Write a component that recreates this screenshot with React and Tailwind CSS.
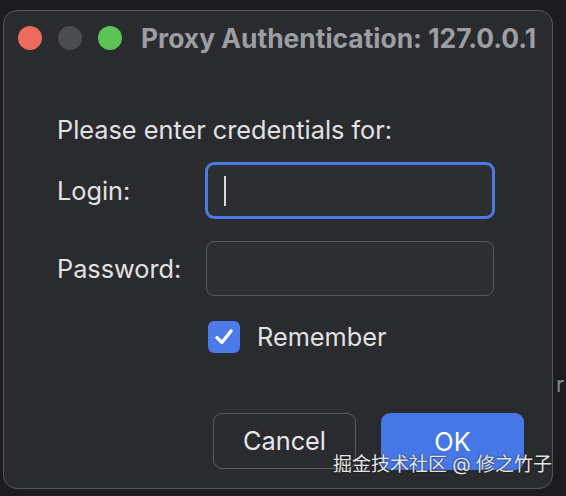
export default function App() {
  return (
    <div className="relative w-[566px] h-[496px] overflow-hidden bg-[#1c1c1e] pl-[3px] pt-[10px]" style={{ fontFamily: 'Inter, "Noto Sans CJK SC", sans-serif' }}>
      <div className="w-[550px] h-[479px] rounded-[14px] border border-[#55565a] bg-[#2a2b2e] flex flex-col">
        <div className="flex items-center pl-[14px] pt-[15px]">
          <div className="flex gap-[16px]">
            <span className="w-[24px] h-[24px] rounded-full bg-[#ec6a5e]" />
            <span className="w-[24px] h-[24px] rounded-full bg-[#4b4c4f]" />
            <span className="w-[24px] h-[24px] rounded-full bg-[#5cc454]" />
          </div>
          <div className="ml-[19px] text-[26.4px] font-bold text-[#9d9ea1] leading-[24px] whitespace-nowrap">Proxy Authentication: 127.0.0.1</div>
        </div>
        <div className="pl-[53px] pt-[66px] flex flex-col text-[25.3px] text-[#e2e2e3] leading-[28px]">
          <div className="whitespace-nowrap">Please enter credentials for:</div>
          <div className="mt-[18px] flex items-center">
            <div className="w-[148px]">Login:</div>
            <div className="w-[290px] h-[57px] rounded-[9px] border-[3px] border-[#4b7be2] bg-[#2d2e31] flex items-center pl-[16px]">
              <span className="w-[2px] h-[30px] bg-[#d8d8d8]" />
            </div>
          </div>
          <div className="mt-[22px] flex items-center">
            <div className="w-[149px]">Password:</div>
            <div className="w-[288px] h-[55px] rounded-[8px] border-[1.5px] border-[#57585b] bg-[#2d2e31]" />
          </div>
          <div className="mt-[25px] ml-[151px] flex items-center">
            <div className="w-[32px] h-[32px] rounded-[6px] bg-[#4b7be8] flex items-center justify-center">
              <svg width="24" height="24" viewBox="0 0 22 22" fill="none">
                <path d="M4.5 11.5 L9 16 L17.5 5.5" stroke="white" strokeWidth="3" strokeLinecap="round" strokeLinejoin="round" />
              </svg>
            </div>
            <div className="ml-[17px]">Remember</div>
          </div>
          <div className="mt-[60px] ml-[156px] flex gap-[25px]">
            <div className="w-[143px] h-[56px] rounded-[9px] border-[1.5px] border-[#5a5b5e] flex items-center justify-center text-[#e8e8e8]">Cancel</div>
            <div className="w-[143px] h-[57px] rounded-[9px] bg-[#4677e6] flex items-center justify-center text-white">OK</div>
          </div>
        </div>
      </div>
      <div className="absolute left-[333px] top-[452px] text-[19px] leading-[26px] text-[#e6e6e6]" style={{ textShadow: '0 0 2px rgba(0,0,0,0.8)' }}>掘金技术社区 @ 修之竹子</div>
      <div className="absolute left-[556px] top-[370px] text-[22px] leading-[28px] text-[#8a8a8a]">r</div>
    </div>
  );
}
